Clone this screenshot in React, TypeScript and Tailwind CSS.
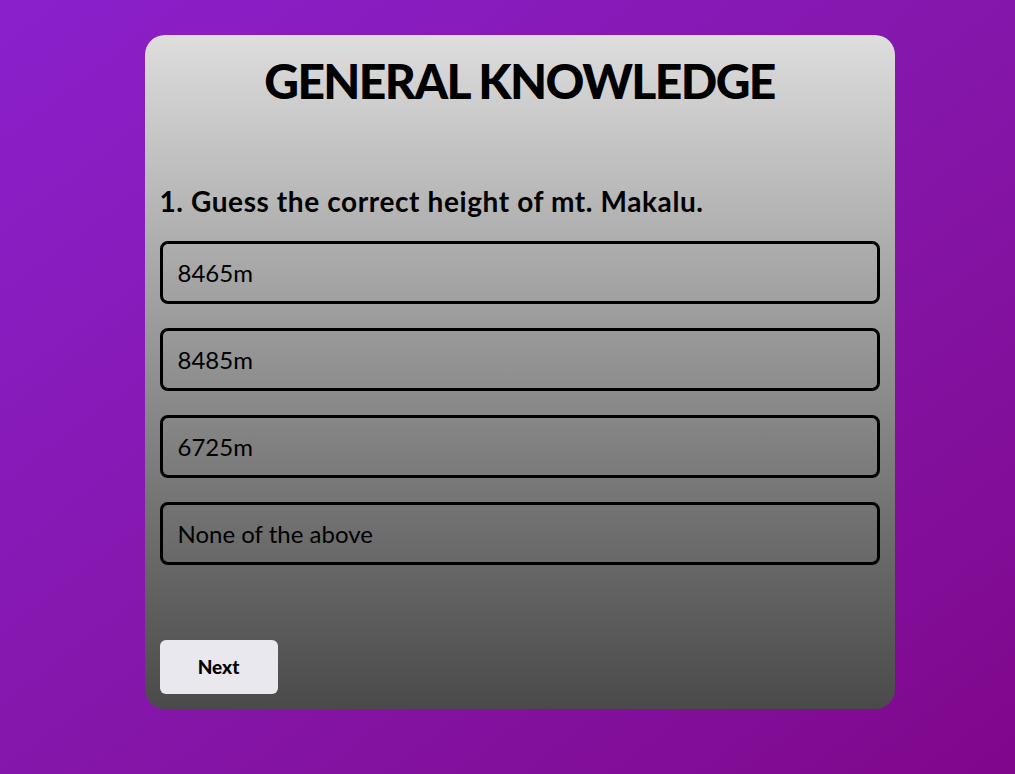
const options = ["8465m", "8485m", "6725m", "None of the above"];

export default function App() {
  return (
    <div
      className="flex min-h-screen justify-center bg-gradient-to-br from-[#8a20cc] to-[#80068c] pt-[35px] pl-[24px]"
      style={{ fontFamily: "Lato, 'Liberation Sans', sans-serif" }}
    >
      <div className="flex h-[674px] w-[750px] flex-col rounded-[20px] bg-gradient-to-b from-[#dedede] to-[#4a4a4a] px-[15px] pb-[15px]">
        <h1 className="mt-[16px] text-center text-[48px] leading-[60px] font-black tracking-[-1.6px] text-black">
          GENERAL KNOWLEDGE
        </h1>
        <h2 className="mt-[74px] text-[28px] leading-[32px] font-bold tracking-[0.6px] text-black">
          1. Guess the correct height of mt. Makalu.
        </h2>
        <div className="mt-[24px] flex flex-col gap-[24px]">
          {options.map((o) => (
            <button
              key={o}
              className="flex h-[63px] w-[720px] items-center rounded-[8px] border-[3px] border-black px-[15px] text-left text-[24px] text-black"
            >
              {o}
            </button>
          ))}
        </div>
        <div className="mt-auto">
          <button className="h-[54px] w-[118px] rounded-[6px] bg-[#e8e8ee] text-[19px] font-black text-black">
            Next
          </button>
        </div>
      </div>
    </div>
  );
}
